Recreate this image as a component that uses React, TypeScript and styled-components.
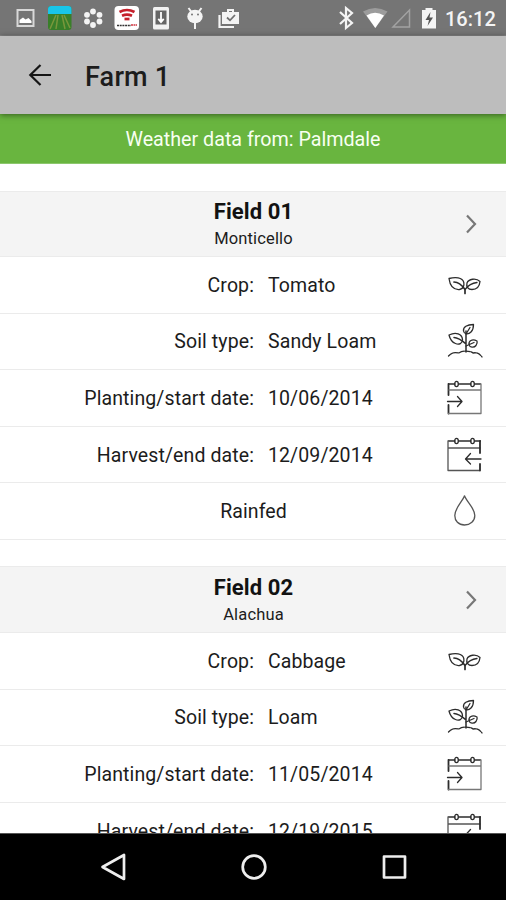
import React from "react";
import styled, { createGlobalStyle } from "styled-components";

const GlobalStyle = createGlobalStyle`
  * { box-sizing: border-box; }
  body { margin: 0; background: #fff; font-family: Roboto, "Liberation Sans", sans-serif; color: #1c1c1c; }
`;

const Screen = styled.div`
  width: 506px;
  height: 900px;
  display: flex;
  flex-direction: column;
  overflow: hidden;
  background: #fff;
`;

const StatusBar = styled.div`
  height: 36px;
  flex: none;
  display: flex;
  justify-content: space-between;
  background: #757575;
  border-bottom: 1px solid #858585;
`;

const StatusGroup = styled.svg`
  display: block;
  height: 35px;
  flex: none;
`;

const StatusRight = styled.div`
  display: flex;
`;

const Clock = styled.span`
  width: 61px;
  line-height: 38px;
  font-size: 20px;
  font-weight: 500;
  letter-spacing: 0;
  color: #f4f4f4;
`;

const AppBar = styled.header`
  position: relative;
  height: 78px;
  flex: none;
  display: flex;
  align-items: center;
  padding-left: 27px;
  background: #bdbdbd;
  box-shadow: 0 1px 6px rgba(0, 0, 0, 0.5);
`;

const BackIcon = styled.svg`
  width: 26px;
  height: 26px;
`;

const Title = styled.h1`
  margin: 3px 0 0 32px;
  font-size: 27px;
  font-weight: 500;
  letter-spacing: 0.2px;
  color: #1c1c1c;
`;

const Banner = styled.div`
  height: 50px;
  flex: none;
  padding-top: 1px;
  line-height: 50px;
  text-align: center;
  font-size: 19.7px;
  color: #f8fff2;
  background: #69b53f;
  border-bottom: 1px solid #8cc76c;
`;

const Content = styled.main`
  flex: 1;
  min-height: 0;
  overflow: hidden;
  padding-top: 26.5px;
`;

const FieldCard = styled.section`
  margin-bottom: 26.5px;
`;

const FieldHeader = styled.div`
  height: 66.5px;
  display: grid;
  grid-template-columns: 84px 1fr 84px;
  align-items: center;
  text-align: center;
  background: #f4f4f4;
  border-top: 1px solid #ebebeb;
  border-bottom: 1px solid #ebebeb;
`;

const FieldTitle = styled.div`
  grid-column: 2;
  display: flex;
  flex-direction: column;
  padding: 2px 0 0 1px;
`;

const FieldName = styled.strong`
  line-height: 28px;
  font-size: 22px;
  font-weight: 700;
  letter-spacing: 0.1px;
  color: #121212;
`;

const FieldPlace = styled.span`
  line-height: 25px;
  font-size: 16.5px;
  letter-spacing: 0.15px;
`;

const Row = styled.div`
  height: 56.6px;
  display: grid;
  grid-template-columns: 254px 1fr 84px;
  align-items: center;
  font-size: 19.5px;
  letter-spacing: 0.1px;
  border-bottom: 1.4px solid #ebebeb;
`;

const Label = styled.span`
  padding-top: 1px;
  text-align: right;
`;

const Value = styled.span`
  padding: 1px 0 0 14px;
`;

const Note = styled.span`
  grid-column: 1 / 3;
  text-align: center;
  padding: 1px 0 0 85px;
`;

const RowIcon = styled.svg`
  display: block;
  width: 40px;
  height: 40px;
  margin-left: 23px;
  fill: none;
  stroke: #2c2c2c;
  stroke-width: 1.3;
  stroke-linecap: round;
  stroke-linejoin: round;
`;

const Chevron = styled.svg`
  width: 14px;
  height: 22px;
  margin-left: 43px;
  fill: none;
  stroke: #777;
  stroke-width: 2.2;
`;

const NavBar = styled.nav`
  height: 67px;
  flex: none;
  display: flex;
  justify-content: center;
  gap: 112px;
  padding: 19px 0 0 1px;
  background: #000;
  border-top: 1px solid #555;
`;

const NavIcon = styled.svg`
  width: 28px;
  height: 28px;
  fill: none;
  stroke: #eee;
  stroke-width: 2.7;
  stroke-linejoin: round;
`;

type IconKind = "crop" | "soil" | "start" | "end" | "water";

const CalendarTop = () => (
  <>
    <path d="M3.5 6H10M13.5 6H26M29.5 6H35.5" />
    <ellipse cx="11.5" cy="6" rx="1.8" ry="2.6" />
    <ellipse cx="27.5" cy="6" rx="1.8" ry="2.6" />
  </>
);

const shapes: Record<IconKind, React.ReactNode> = {
  crop: (
    <>
      <path d="M4 13.5C10 12 17.5 12 18.8 17.5C19.5 21.5 18.5 23.5 14.5 24.5C8.5 25 5 21 4 13.5Z" />
      <path d="M9 17C13 17 16.5 19.5 20 24.5V28.5" strokeWidth="1.7" />
      <path d="M35 16.5C31 12.5 23.5 14 22 18C21 21.5 23 24.5 27 24.5C31.5 24.5 34.5 21.5 35 16.5Z" />
      <path d="M32 17.5C27 18 23 20.5 20 24.5" />
    </>
  ),
  soil: (
    <>
      <path d="M4 14C11 10.5 17 13 17.5 18.5C17.5 22.5 14 24 10.5 22.5C6.5 21 5 18 4 14Z" />
      <path d="M9 16.5C13 16.5 17 19.5 21 23M21 31V10" strokeWidth="1.5" />
      <path d="M28.5 3.5C22 3.5 18 6 18.5 10C19 13 23 14 26 11C28 9 28.5 6.5 28.5 3.5ZM25 6.5L21 13" />
      <path d="M32 20C27 17.5 23.5 20 24 23.5C24.5 26.5 29 27 31 24.5C32 23 32.5 21.5 32 20ZM29 21.5L21 25" />
      <path d="M3.5 35C7 31 10 31.5 14 32C17 29.5 25 29.5 28 32C32 31 35 33 37 36" strokeDasharray="5 1" />
    </>
  ),
  start: (
    <>
      <CalendarTop />
      <path d="M3.5 6V17M3.5 27V35.5" strokeWidth="1.8" />
      <path d="M3.5 35.5H36V6M4 12H36" stroke="#777" />
      <path d="M2.5 23.5H16M12.5 18.5L17 23.5L12.5 28.5" />
    </>
  ),
  end: (
    <>
      <CalendarTop />
      <path d="M3 6V35.5H34.5M3 13H35" stroke="#555" />
      <path d="M35 6V18M35 29V35.5" strokeWidth="1.8" />
      <path d="M36 24H21M25.5 18.5L20.5 24L25.5 29" />
    </>
  ),
  water: (
    <path
      d="M19.5 4.8C17.5 10.5 9.8 17 9.8 24.5C9.8 30 13.5 34 19.5 34C25.5 34 29.8 30 29.8 24.5C29.8 17 21.5 10.5 19.5 4.8Z"
      stroke="#555"
    />
  ),
};

const Glyph = ({ kind }: { kind: IconKind }) => (
  <RowIcon viewBox="0 0 40 40" aria-hidden>
    {shapes[kind]}
  </RowIcon>
);

interface Field {
  name: string;
  place: string;
  crop: string;
  soil: string;
  start: string;
  end: string;
}

const fields: Field[] = [
  { name: "Field 01", place: "Monticello", crop: "Tomato", soil: "Sandy Loam", start: "10/06/2014", end: "12/09/2014" },
  { name: "Field 02", place: "Alachua", crop: "Cabbage", soil: "Loam", start: "11/05/2014", end: "12/19/2015" },
];

const DetailRow = ({ label, value, kind }: { label: string; value: string; kind: IconKind }) => (
  <Row>
    <Label>{label}:</Label>
    <Value>{value}</Value>
    <Glyph kind={kind} />
  </Row>
);

const Notifications = () => (
  <StatusGroup width="250" viewBox="0 0 250 35" aria-hidden>
    <path d="M17.5 10H33.5V26H17.5Z" fill="none" stroke="#d8d8d8" strokeWidth="2" />
    <path d="M19.5 23V20L23 17.5L25.5 19.5L28.5 18L31.5 21V23Z" fill="#fff" />
    <rect x="48" y="6" width="23.5" height="24" rx="3" fill="#397f29" />
    <path d="M48 14V9Q48 6 51 6H68.5Q71.5 6 71.5 9V14Z" fill="#19c5e9" />
    <path d="M56 15L50 29M58 15L56 29M62 15L65 29M64 15L70 28" stroke="#79973b" strokeWidth="1.5" />
    <g fill="#f4f4f4">
      <circle cx="93" cy="11.5" r="2.9" />
      <circle cx="87" cy="14.8" r="2.9" />
      <circle cx="99.5" cy="14.8" r="2.9" />
      <circle cx="87" cy="21.5" r="2.9" />
      <circle cx="99.5" cy="21.5" r="2.9" />
      <circle cx="93" cy="25" r="2.9" />
    </g>
    <rect x="114.5" y="6" width="24.5" height="24" rx="4" fill="#fff" />
    <g fill="none" stroke="#c5202b" strokeWidth="2.7">
      <path d="M119.5 12Q127 8 134.5 12" />
      <path d="M122 15.8Q127 13.5 132 15.8" />
      <path d="M124.5 19H129.5" />
    </g>
    <path d="M117 25.5H131" stroke="#333" strokeWidth="1.6" strokeDasharray="2 .7" />
    <path d="M131 25H137" stroke="#cf3540" strokeWidth="1.6" strokeDasharray="2 .5" />
    <rect x="153" y="7" width="16" height="22.5" rx="1.5" fill="#f2f2f2" />
    <rect x="155.5" y="10.5" width="11" height="14" fill="#666" />
    <path d="M161 12V21M158.3 18.8L161 22L163.7 18.8" fill="none" stroke="#fff" strokeWidth="1.8" />
    <ellipse cx="195" cy="16.5" rx="7.7" ry="6.8" fill="#f4f4f4" />
    <path d="M188.5 8L191.5 12M201.5 8L198.5 12M195 22V29" stroke="#f4f4f4" strokeWidth="2" fill="none" />
    <circle cx="192" cy="14.5" r="1" fill="#757575" />
    <circle cx="198" cy="14.5" r="1" fill="#757575" />
    <path d="M219.5 15V27H234" fill="none" stroke="#f4f4f4" strokeWidth="2.2" />
    <path d="M222 12H227V9H234V12H239V24H222ZM229 11V12H232V11Z" fill="#f4f4f4" fillRule="evenodd" />
    <path d="M227 17.5L230 20.3L235 15" fill="none" stroke="#707070" strokeWidth="1.8" />
  </StatusGroup>
);

const SystemIcons = () => (
  <StatusGroup width="111" viewBox="334 0 111 35" aria-hidden>
    <path d="M340 12L352 23L346 28V8L352 13L340 24" fill="none" stroke="#f4f4f4" strokeWidth="2.2" />
    <path d="M363 11.5Q375 4.5 387.5 11.5L375.3 28Z" fill="#9c9c9c" />
    <path d="M366.5 15.5Q375 10 384 15.5L375.3 28Z" fill="#fff" />
    <path d="M409.5 10V27H393Z" fill="none" stroke="#a2a2a2" strokeWidth="1.5" />
    <path d="M422 10H425.5V8H432.5V10H436V28.5H422Z" fill="#f4f4f4" />
    <path d="M430.5 12L425.5 20H429L427.5 26L433 17.5H429.5Z" fill="#555" />
  </StatusGroup>
);

export default function App() {
  return (
    <>
      <GlobalStyle />
      <Screen>
        <StatusBar>
          <Notifications />
          <StatusRight>
            <SystemIcons />
            <Clock>16:12</Clock>
          </StatusRight>
        </StatusBar>
        <AppBar>
          <BackIcon viewBox="0 0 26 26" fill="none" stroke="#151515" strokeWidth="2.2">
            <path d="M24 13H3.5M13.5 3L3.3 13L13.5 23" />
          </BackIcon>
          <Title>Farm 1</Title>
        </AppBar>
        <Banner>Weather data from: Palmdale</Banner>
        <Content>
          {fields.map((field) => (
            <FieldCard key={field.name}>
              <FieldHeader>
                <FieldTitle>
                  <FieldName>{field.name}</FieldName>
                  <FieldPlace>{field.place}</FieldPlace>
                </FieldTitle>
                <Chevron viewBox="0 0 14 22">
                  <path d="M2 2.5L10 11L2 19.5" />
                </Chevron>
              </FieldHeader>
              <DetailRow label="Crop" value={field.crop} kind="crop" />
              <DetailRow label="Soil type" value={field.soil} kind="soil" />
              <DetailRow label="Planting/start date" value={field.start} kind="start" />
              <DetailRow label="Harvest/end date" value={field.end} kind="end" />
              <Row>
                <Note>Rainfed</Note>
                <Glyph kind="water" />
              </Row>
            </FieldCard>
          ))}
        </Content>
        <NavBar>
          <NavIcon viewBox="0 0 28 28">
            <path d="M24 2V26L2.5 14Z" />
          </NavIcon>
          <NavIcon viewBox="0 0 28 28">
            <circle cx="14" cy="14" r="11.3" />
          </NavIcon>
          <NavIcon viewBox="0 0 28 28">
            <rect x="4" y="3.5" width="21" height="21" />
          </NavIcon>
        </NavBar>
      </Screen>
    </>
  );
}
